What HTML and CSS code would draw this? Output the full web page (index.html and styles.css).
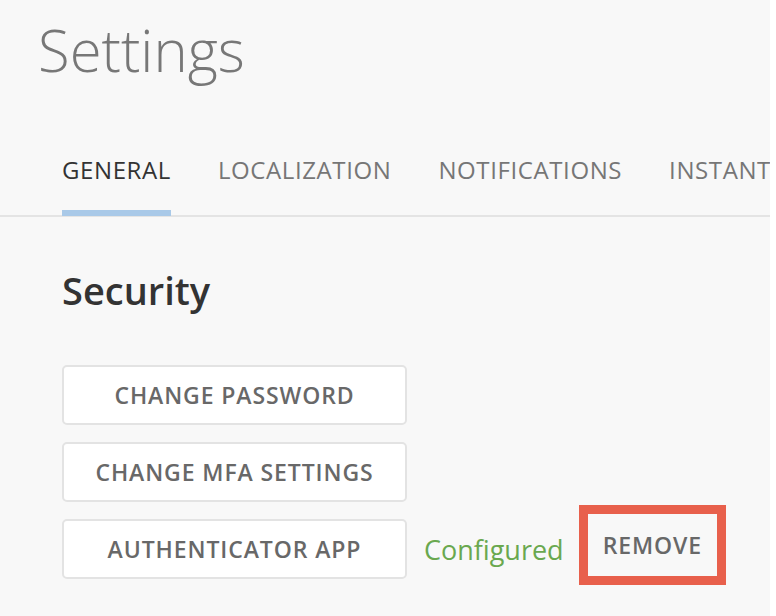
FILE: index.html
```html
<!DOCTYPE html>
<html>
<head>
<meta charset="utf-8">
<link rel="stylesheet" href="styles.css">
</head>
<body>
<div class="page">
  <h1 class="title">Settings</h1>
  <nav class="tabs">
    <a class="tab active">GENERAL</a>
    <a class="tab">LOCALIZATION</a>
    <a class="tab">NOTIFICATIONS</a>
    <a class="tab">INSTANT</a>
  </nav>
  <section class="section">
    <h2 class="section-title">Security</h2>
    <div class="rows">
      <div class="row"><button class="btn">CHANGE PASSWORD</button></div>
      <div class="row"><button class="btn">CHANGE MFA SETTINGS</button></div>
      <div class="row">
        <button class="btn">AUTHENTICATOR APP</button>
        <span class="status">Configured</span>
        <span class="highlight"><button class="link">REMOVE</button></span>
      </div>
    </div>
  </section>
</div>
</body>
</html>
```
FILE: styles.css
```css
html, body {
  margin: 0;
  padding: 0;
  background: #ffffff;
  font-family: "Open Sans", "Liberation Sans", sans-serif;
}
.page {
  width: 770px;
  height: 616px;
  background: #f8f8f8;
  overflow: hidden;
}
.title {
  margin: 0;
  padding: 12px 0 0 38px;
  font-size: 58px;
  font-weight: 300;
  color: #777;
  line-height: 76px;
}
.tabs {
  display: flex;
  margin-top: 67px;
  padding-left: 62px;
  border-bottom: 2px solid #e4e4e4;
  white-space: nowrap;
  gap: 47px;
}
.tab {
  font-size: 24px;
  font-weight: 400;
  letter-spacing: 0.6px;
  color: #767676;
  padding-bottom: 25px;
  border-bottom: 6px solid transparent;
  margin-bottom: -1px;
  line-height: 30px;
}
.tab.active {
  color: #333;
  border-bottom-color: #a9c9e8;
}
.section {
  padding-left: 62px;
}
.section-title {
  margin: 0;
  padding-top: 50px;
  font-size: 38px;
  font-weight: 600;
  color: #333;
  line-height: 46px;
}
.rows {
  display: flex;
  flex-direction: column;
  gap: 17px;
  margin-top: 52px;
}
.row {
  display: flex;
  align-items: center;
  gap: 17px;
}
.btn {
  width: 345px;
  height: 60px;
  background: #fff;
  border: 2px solid #e3e3e3;
  border-radius: 5px;
  font-family: inherit;
  font-size: 23px;
  font-weight: 600;
  color: #686868;
  letter-spacing: 0.9px;
}
.status {
  font-size: 27px;
  color: #6aa84f;
}
.highlight {
  align-self: flex-start;
  margin: -14px 0 -6px -2px;
  height: 62px;
  display: flex;
  align-items: center;
  border: 9px solid #e8604c;
  padding: 0 15px;
}
.link {
  background: none;
  border: none;
  padding: 0;
  font-family: inherit;
  font-size: 23px;
  font-weight: 600;
  color: #686868;
  letter-spacing: 0.9px;
}
```
